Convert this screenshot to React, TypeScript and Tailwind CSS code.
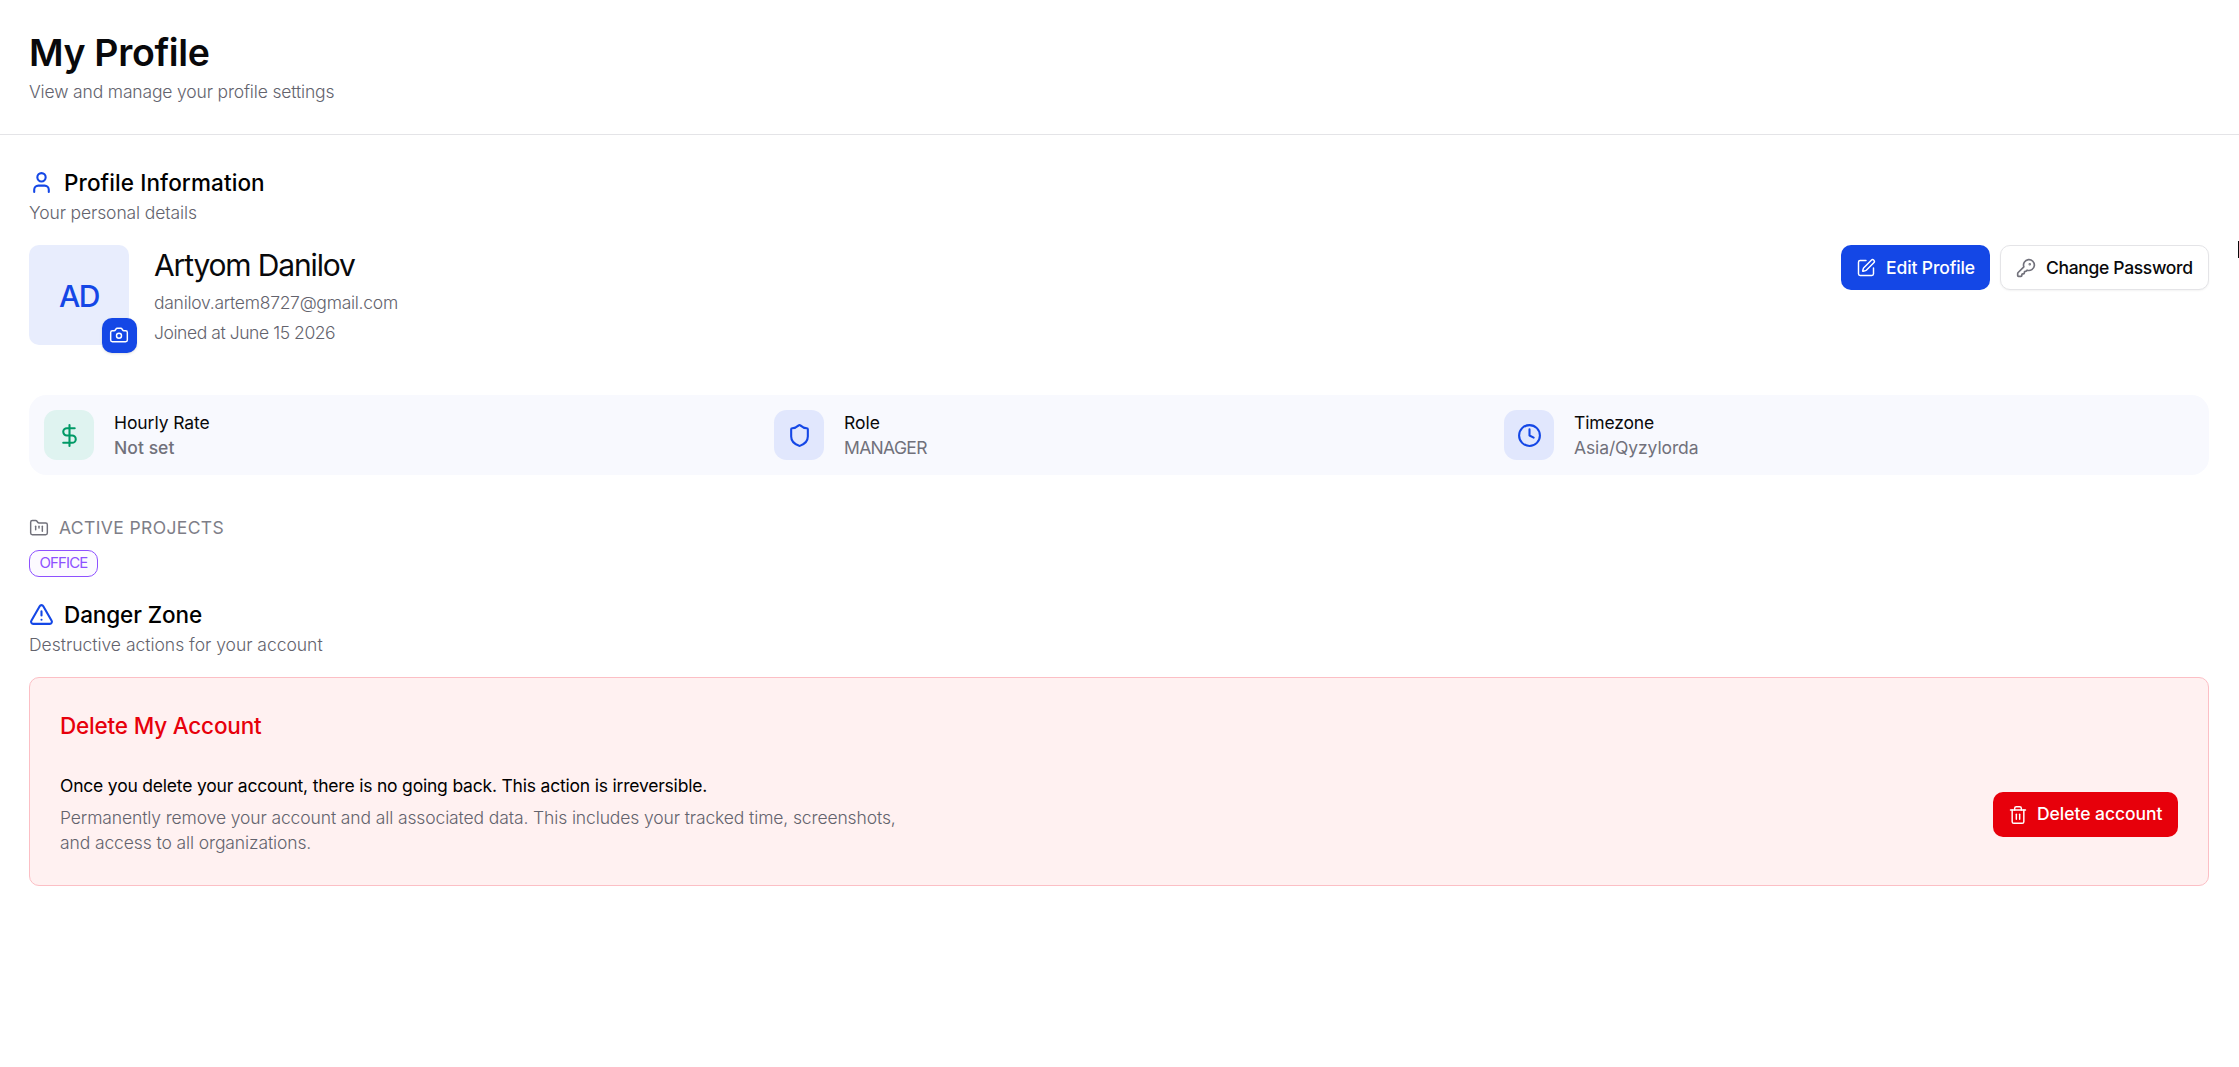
import React from 'react';
import { Camera, Clock, DollarSign, FolderKanban, KeyRound, Shield, SquarePen, Trash2, TriangleAlert, User } from 'lucide-react';
import type { LucideIcon } from 'lucide-react';

interface Stat {
    icon: LucideIcon;
    label: string;
    value: string;
    tile: string;
    labelClass: string;
    valueClass: string;
}

const stats: Stat[] = [
    { icon: DollarSign, label: 'Hourly Rate', value: 'Not set', tile: 'bg-[#dff3f0] text-[#009966]', labelClass: 'tracking-[-0.08px]', valueClass: 'font-medium tracking-[0.05px]' },
    { icon: Shield, label: 'Role', value: 'MANAGER', tile: 'bg-[#e1e7fd] text-[#1447e6]', labelClass: 'tracking-normal', valueClass: 'tracking-[-0.65px]' },
    { icon: Clock, label: 'Timezone', value: 'Asia/Qyzylorda', tile: 'bg-[#e1e7fd] text-[#1447e6]', labelClass: 'tracking-[-0.15px]', valueClass: 'tracking-[-0.12px]' },
];

const SectionHeading: React.FC<{ icon: LucideIcon; title: string; subtitle: string; titleClass: string; subtitleClass: string }> = ({ icon: Icon, title, subtitle, titleClass, subtitleClass }) => (
    <div>
        <h2 className="flex items-center gap-2.5 h-[25px] text-[22.5px] font-medium text-black">
            <Icon size={25} className="text-[#1447e6]" />
            <span className={titleClass}>{title}</span>
        </h2>
        <p className={`mt-[5px] text-[17.5px] leading-[25px] font-light text-[#63636d] ${subtitleClass}`}>{subtitle}</p>
    </div>
);

const StatItem: React.FC<{ stat: Stat }> = ({ stat }) => (
    <div className="flex items-center gap-5">
        <div className={`w-[50px] h-[50px] rounded-[12.5px] flex items-center justify-center ${stat.tile}`}>
            <stat.icon size={25} />
        </div>
        <div className="text-[17.5px] leading-[25px]">
            <p className={`text-[#09090b] ${stat.labelClass}`}>{stat.label}</p>
            <p className={`text-[#71717b] ${stat.valueClass}`}>{stat.value}</p>
        </div>
    </div>
);

export default function App() {
    return (
        <div className="relative min-h-screen overflow-hidden bg-white font-['Inter',sans-serif] text-[#09090b] whitespace-nowrap">
            <header className="h-[135px] border-b border-[#e4e4e7] pt-[30px] pl-[29px]">
                <h1 className="text-[37.5px] leading-[45px] font-semibold tracking-[-0.35px]">My Profile</h1>
                <p className="mt-1 text-[17.5px] leading-[25px] font-light text-[#63636d] tracking-[-0.16px]">View and manage your profile settings</p>
            </header>

            <main className="pt-[35px] pl-[29px] pr-[30px]">
                <SectionHeading icon={User} title="Profile Information" subtitle="Your personal details" titleClass="tracking-[0.1px]" subtitleClass="tracking-[-0.12px]" />

                <div className="mt-5 h-[100px] flex items-start justify-between">
                    <div className="flex gap-[25px]">
                        <div className="relative w-[100px] h-[100px] pt-0.5 rounded-[10px] bg-[#e8edfd] flex items-center justify-center text-[30px] font-medium text-[#1447e6]">
                            <span className="tracking-[-1.4px]">AD</span>
                            <button className="absolute left-[73px] top-[73px] w-[35px] h-[35px] pr-px pb-px rounded-[10px] bg-[#1447e6] text-white flex items-center justify-center shadow-sm">
                                <Camera size={20} strokeWidth={1.75} />
                            </button>
                        </div>
                        <div>
                            <p className="text-[30px] leading-[40px] tracking-[-1.15px]">Artyom Danilov</p>
                            <p className="mt-[5px] text-[17.5px] leading-[25px] font-light text-[#63636d] tracking-[-0.27px]">danilov.artem8727@gmail.com</p>
                            <p className="mt-[5px] text-[17.5px] leading-[25px] font-light text-[#63636d] tracking-[-0.43px]">Joined at June 15 2026</p>
                        </div>
                    </div>
                    <div className="flex gap-2.5 text-[17.5px] font-medium">
                        <button className="w-[149px] h-[45px] pl-[15px] pt-px rounded-[10px] bg-[#1447e6] text-white flex items-center gap-2.5">
                            <SquarePen size={20} strokeWidth={1.75} />
                            <span className="tracking-[-0.12px]">Edit Profile</span>
                        </button>
                        <button className="w-[209px] h-[45px] pl-[15px] pt-px rounded-[10px] border border-[#e4e4e7] bg-white flex items-center gap-2.5 shadow-xs">
                            <KeyRound size={20} className="text-[#71717b]" />
                            <span className="tracking-[-0.33px]">Change Password</span>
                        </button>
                    </div>
                </div>

                <div className="mt-[50px] h-20 px-[15px] rounded-[17.5px] bg-[#f8f9fe] grid grid-cols-3 gap-10 items-center">
                    {stats.map(stat => <StatItem key={stat.label} stat={stat} />)}
                </div>

                <div className="mt-10">
                    <h3 className="flex items-center gap-2.5 h-[25px] pt-px text-[17.5px] text-[#71717b]">
                        <FolderKanban size={20} strokeWidth={1.75} />
                        <span className="opacity-90 tracking-[0.38px]">ACTIVE PROJECTS</span>
                    </h3>
                    <div className="mt-2.5 w-[69px] h-[27px] rounded-[10px] border border-[#8e51ff] bg-[#fcfaff] flex items-center justify-center text-[15px] text-[#8e51ff]">
                        <span className="tracking-[-0.85px]">OFFICE</span>
                    </div>
                </div>

                <div className="mt-[25px]">
                    <SectionHeading icon={TriangleAlert} title="Danger Zone" subtitle="Destructive actions for your account" titleClass="tracking-[-0.1px]" subtitleClass="tracking-[-0.02px]" />
                </div>

                <section className="mt-5 h-[209px] rounded-[10px] border border-[#fcbfc5] bg-[#fff1f1] px-[30px] pt-[34px]">
                    <h3 className="text-[22.5px] leading-[28px] font-medium text-[#e7000b] tracking-[-0.19px]">Delete My Account</h3>
                    <div className="mt-[33px] flex items-center justify-between">
                        <div className="text-[17.5px] leading-[25px]">
                            <p className="text-black tracking-[-0.2px]">Once you delete your account, there is no going back. This action is irreversible.</p>
                            <p className="mt-[7px] font-light text-[#63636d] tracking-[-0.12px]">Permanently remove your account and all associated data. This includes your tracked time, screenshots,</p>
                            <p className="font-light text-[#63636d] tracking-[-0.11px]">and access to all organizations.</p>
                        </div>
                        <button className="w-[185px] h-[45px] pl-[15px] pt-px rounded-[10px] bg-[#e7000b] text-white text-[17.5px] font-medium flex items-center gap-[9px]">
                            <Trash2 size={20} strokeWidth={1.75} />
                            <span className="tracking-[-0.04px]">Delete account</span>
                        </button>
                    </div>
                </section>
            </main>

            {/* text cursor at the window edge */}
            <div className="absolute top-[241px] right-0 w-px h-[17px] bg-[#09090b]" />
        </div>
    );
}
